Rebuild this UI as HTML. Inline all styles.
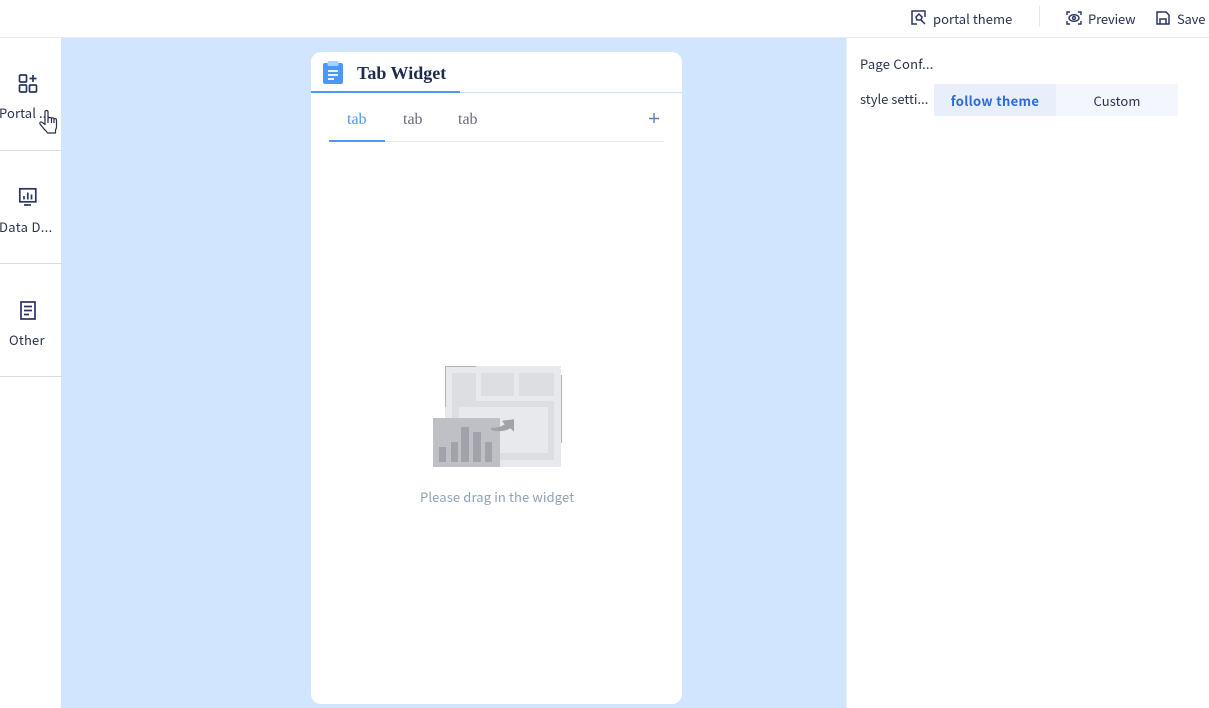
<!DOCTYPE html>
<html><head><meta charset="utf-8"><style>
html,body{margin:0;padding:0;width:1209px;height:708px;overflow:hidden;background:#fff}
body{position:relative;font-family:"Noto Sans CJK SC","Liberation Sans",sans-serif;font-size:13px;color:#2a3350}
.a{position:absolute;white-space:nowrap;line-height:18px}
.b{position:absolute}
svg{position:absolute;overflow:visible}
.s{font-family:"Liberation Serif",serif}
</style></head><body>
<div class="b" style="left:0;top:0;width:1209px;height:37px;background:#fff;border-bottom:1px solid #e8ecf2"></div>
<div class="b" style="left:61px;top:38px;width:785px;height:670px;background:#d1e6fe"></div>
<div class="b" style="left:846px;top:38px;width:1px;height:670px;background:#eceef2"></div>

<svg style="left:911px;top:10px" width="16" height="16" fill="none" stroke="#2a3563" stroke-width="1.5"><path d="M6 14H1V1h13v6"/><path d="M5 7l3-3 3 3-1 3H6zM10 10l4 4"/></svg>
<div class="a" style="left:933px;top:10px;letter-spacing:.05px">portal theme</div>
<div class="b" style="left:1039px;top:6px;width:1px;height:21px;background:#e6e8ee"></div>
<svg style="left:1066px;top:11px" width="16" height="14" fill="none" stroke="#2a3563" stroke-width="1.4"><path d="M1 4V1h3M12 1h3v3M15 10v3h-3M4 13H1v-3"/><ellipse cx="8" cy="7" rx="5" ry="3.3"/><circle cx="8" cy="7" r="1.500"/></svg>
<div class="a" style="left:1088px;top:10px;letter-spacing:-.14px">Preview</div>
<svg style="left:1156px;top:11px" width="14" height="14" fill="none" stroke="#2a3563" stroke-width="1.5"><path d="M1 1h9l3 3v9H1z"/><path d="M4 13V8h6v5"/></svg>
<div class="a" style="left:1177px;top:10px;letter-spacing:-.2px">Save</div>

<svg style="left:18px;top:74px" width="20" height="20" fill="none" stroke="#2a3563" stroke-width="1.7"><rect x="1.500" y="1" width="7" height="7" rx="1"/><rect x="1.500" y="11" width="7" height="7" rx="1"/><rect x="11.500" y="11" width="7" height="7" rx="1"/><path d="M15 1v7M11.500 4.500h7"/></svg>
<div class="a" style="left:-1px;top:104px;letter-spacing:.1px">Portal ...</div>
<div class="b" style="left:0;top:150px;width:61px;height:1px;background:#dcdcdc"></div>

<svg style="left:18px;top:187px" width="20" height="20" fill="none" stroke="#2a3563" stroke-width="1.7"><rect x="1.800" y="1.800" width="16" height="13"/><path d="M6 18h7"/><path d="M6 9v3.500M9.800 5.500v7M13.500 7.500v5"/></svg>
<div class="a" style="left:-1px;top:218px;letter-spacing:.32px">Data D...</div>
<div class="b" style="left:0;top:263px;width:61px;height:1px;background:#dcdcdc"></div>

<svg style="left:20px;top:301px" width="16" height="19" fill="none" stroke="#2a3563" stroke-width="1.7"><rect x="1" y="1" width="14" height="17"/><path d="M4 5.500h8M4 9.500h8M4 13.500h5"/></svg>
<div class="a" style="left:9px;top:331px;letter-spacing:.2px">Other</div>
<div class="b" style="left:0;top:376px;width:61px;height:1px;background:#dcdcdc"></div>

<svg style="left:39px;top:110px" width="19" height="24" fill="#fff" stroke="#2a2f45" stroke-width="1.200" stroke-linejoin="round"><path d="M6 14.500V2q0-1.500 1.500-1.500T9 2v6q2-1 3.500 0 1.500-.5 2.500.5 2.500-.5 2.500 2v6q0 2-1 3.500V23H8.500q-1-2-3-3.500L1 14q-.5-1.500.5-2t4.500 2.500z"/><path d="M9 8v5M12.500 8v5M15 8.500V13"/></svg>

<!-- card -->
<div class="b" style="left:311px;top:52px;width:371px;height:652px;background:#fff;border-radius:10px"></div>
<div class="b" style="left:311px;top:92px;width:371px;height:1px;background:#c9e0f8"></div>
<div class="b" style="left:311px;top:91px;width:149px;height:2px;background:#4c98f5"></div>
<svg style="left:323px;top:61px" width="21" height="23"><rect y="2" width="20" height="21" rx="2" fill="#4c98f7"/><rect x="4.500" y="0" width="11" height="5" rx="1.500" fill="#a6d2fd"/><path d="M5 10h10M5 14h10M5 18h6" stroke="#fff" stroke-width="1.800"/></svg>
<div class="a s" style="left:357px;top:63px;font-size:18px;font-weight:bold;color:#1e2b4d;line-height:20px">Tab Widget</div>
<div class="a s" style="left:347px;top:110px;font-size:16px;line-height:19px;color:#4c98f5">tab</div>
<div class="a s" style="left:403px;top:110px;font-size:16px;line-height:19px;color:#6f6b7c">tab</div>
<div class="a s" style="left:458px;top:110px;font-size:16px;line-height:19px;color:#6f6b7c">tab</div>
<svg style="left:649px;top:113px" width="11" height="11"><path d="M0 5.500h10M5 0v10" stroke="#5d7fb4" stroke-width="1.400"/></svg>
<div class="b" style="left:329px;top:141px;width:335px;height:1px;background:#e6e9f0"></div>
<div class="b" style="left:329px;top:140px;width:56px;height:2px;background:#4c98f5"></div>

<!-- illustration -->
<svg style="left:432px;top:365px" width="131" height="103">
<rect x="13" y="1" width="116" height="101" fill="#e8e9ed"/>
<path d="M13.500 42V1.500H44" fill="none" stroke="#b3b3bd" stroke-width="1"/>
<path d="M129.500 10v68" stroke="#b3b3bd" stroke-width="1"/>
<rect x="20" y="8" width="24" height="28" fill="#dddee2"/>
<rect x="49" y="8" width="33" height="23" fill="#dddee2"/>
<rect x="87" y="8" width="35" height="23" fill="#dddee2"/>
<rect x="20" y="36" width="102" height="59" fill="#dddee2"/>
<rect x="27" y="42" width="89" height="46" fill="#e8e9ed"/>
<rect x="1" y="53" width="67" height="49" fill="#bfc0c5"/>
<rect x="7" y="82" width="7" height="15" fill="#a1a2aa"/>
<rect x="19" y="77" width="7" height="20" fill="#a1a2aa"/>
<rect x="29" y="62" width="8" height="35" fill="#a1a2aa"/>
<rect x="41" y="67" width="8" height="30" fill="#a1a2aa"/>
<rect x="53" y="77" width="7" height="20" fill="#a1a2aa"/>
<path d="M59 62.700q6 .5 10.700-1.700l3-1.500-2.700-3.800L82 54.300V66.700l-3.500-3.500Q70 68 59 65z" fill="#a1a2aa"/>
</svg>
<div class="a" style="left:420px;top:488px;color:#8ea3b8;letter-spacing:.12px">Please drag in the widget</div>

<!-- right panel -->
<div class="a" style="left:860px;top:55px;letter-spacing:.25px">Page Conf...</div>
<div class="a" style="left:860px;top:90px">style setti...</div>
<div class="b" style="left:934px;top:84px;width:122px;height:32px;background:#e8eefa;border-radius:2px 0 0 2px;text-align:center;line-height:33px;font-weight:bold;color:#2f6bd8;letter-spacing:.32px">follow theme</div>
<div class="b" style="left:1056px;top:84px;width:122px;height:32px;background:#f3f6fc;border-radius:0 2px 2px 0;text-align:center;line-height:33px;letter-spacing:.1px">Custom</div>
</body></html>
